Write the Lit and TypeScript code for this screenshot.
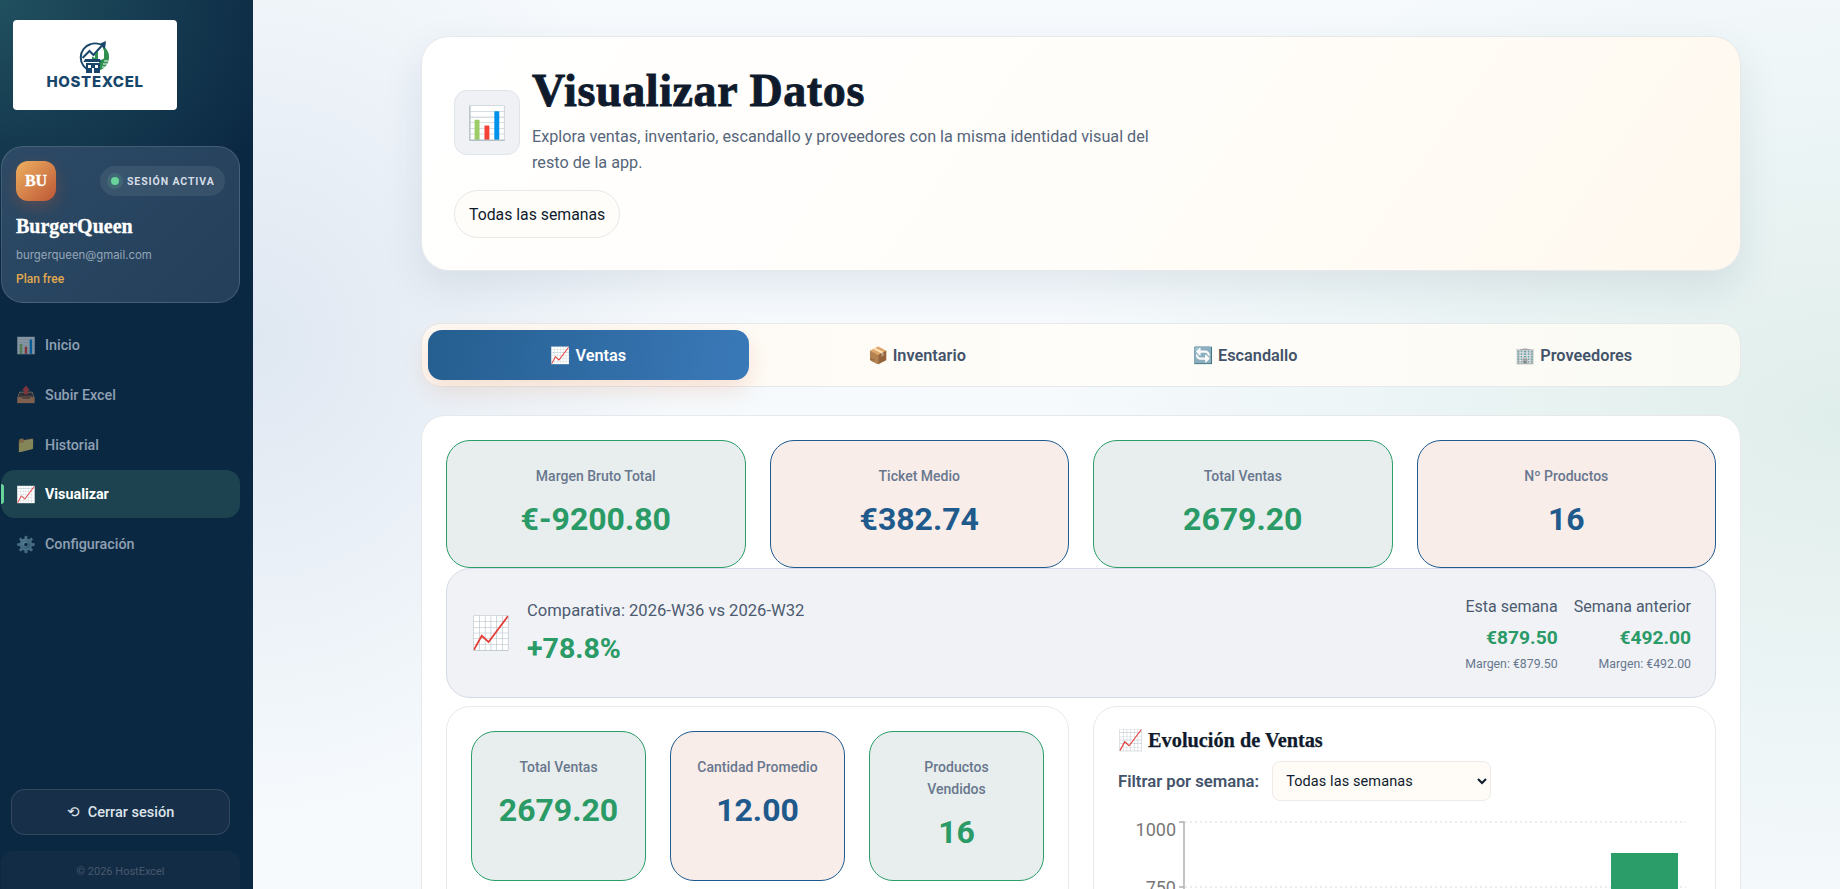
import { LitElement, css, html, svg } from "lit";
import { customElement } from "lit/decorators.js";

const NAV = [
  { icon: "📊", label: "Inicio" },
  { icon: "📤", label: "Subir Excel" },
  { icon: "📁", label: "Historial" },
  { icon: "📈", label: "Visualizar", active: true },
  { icon: "⚙️", label: "Configuración" },
];

const TABS = [
  { icon: "📈", label: "Ventas", active: true },
  { icon: "📦", label: "Inventario" },
  { icon: "🔄", label: "Escandallo" },
  { icon: "🏢", label: "Proveedores" },
];

const STATS = [
  { label: "Margen Bruto Total", value: "€-9200.80", tone: "green" },
  { label: "Ticket Medio", value: "€382.74", tone: "blue" },
  { label: "Total Ventas", value: "2679.20", tone: "green" },
  { label: "Nº Productos", value: "16", tone: "blue" },
];

const SALES = [
  { label: "Total Ventas", value: "2679.20", tone: "green" },
  { label: "Cantidad Promedio", value: "12.00", tone: "blue" },
  { label: "Productos Vendidos", value: "16", tone: "green" },
];

const WEEKS = [
  { label: "Esta semana", value: "€879.50", margin: "Margen: €879.50" },
  { label: "Semana anterior", value: "€492.00", margin: "Margen: €492.00" },
];

const logoMark = svg`
  <path d="M12 5A14 14 0 0 0 12 32" fill="none" stroke="#17466a" stroke-width="2"/>
  <path d="M12 5A14 14 0 0 1 21 5.300" fill="none" stroke="#17466a" stroke-width="1.600"/>
  <path d="M23 7c5 2 7.500 7 7 12-.5 6-4.500 11-10 12.500V22l5-2.500V12z" fill="#2f8f4e"/>
  <path d="M25 22h4M24 25h4M23 28h3" stroke="#fff" stroke-width="1"/>
  <path d="M3.500 19l7-7 4 4 8-9" fill="none" stroke="#17466a" stroke-width="2"/>
  <path d="M20 5l7-3-1 8z" fill="#17466a"/>
  <path d="M13 17.500l3 1.500v-4l3-3v8h-6z" fill="#2f8f4e"/>
  <path d="M6 20h15l1.500 3h-18z" fill="#17466a"/>
  <path d="M7 24h14v10H7z" fill="#17466a"/>
  <path d="M9 26h3v3H9zM16 26h3v3h-3z" fill="#fff"/>
  <path d="M13 29h2v5h-2z" fill="#fff"/>
`;

@customElement("app-root")
export class AppRoot extends LitElement {
  static styles = css`
    :host {
      display: block;
      height: 889px;
      overflow: hidden;
      font-family: Roboto, "Noto Sans", sans-serif;
      color: #0f1b2d;
    }

    .page {
      display: flex;
      height: 889px;
      background:
        radial-gradient(ellipse 800px 520px at 1840px 420px, #e0eeeb 0%, rgba(224, 238, 235, 0) 100%),
        radial-gradient(ellipse 440px 480px at 253px 340px, #dfe7f1 0%, rgba(223, 231, 241, 0) 100%),
        #f6fafd;
    }

    .sidebar {
      flex: 0 0 253px;
      box-sizing: border-box;
      display: flex;
      flex-direction: column;
      padding: 20px 13px 0 1px;
      background:
        radial-gradient(ellipse 300px 260px at 0 0, #21505f 0%, rgba(33, 80, 95, 0) 100%),
        #0b2843;
    }

    .logo {
      margin-left: 12px;
      width: 164px;
      height: 90px;
      box-sizing: border-box;
      padding-top: 19px;
      background: #fff;
      border-radius: 4px;
      display: flex;
      flex-direction: column;
      align-items: center;
    }

    .logo svg {
      width: 32px;
      height: 34px;
      display: block;
    }

    .logo span {
      margin-top: 1px;
      font-family: Inter, sans-serif;
      font-weight: 800;
      font-size: 15px;
      line-height: 15px;
      letter-spacing: 0.65px;
      color: #17466a;
    }

    .user {
      margin-top: 36px;
      height: 157px;
      box-sizing: border-box;
      padding: 14px;
      border: 1px solid rgba(255, 255, 255, 0.14);
      border-radius: 22px;
      background: linear-gradient(135deg, #2d4a66 0%, #233f5a 100%);
    }

    .user-head {
      display: flex;
      justify-content: space-between;
      align-items: center;
    }

    .avatar {
      width: 40px;
      height: 40px;
      border-radius: 12px;
      background: linear-gradient(135deg, #eeb160, #bd5636);
      box-shadow: 0 6px 16px rgba(190, 90, 50, 0.3);
      color: #fff;
      font-family: "Liberation Serif", serif;
      font-weight: 700;
      font-size: 16px;
      -webkit-text-stroke: 0.3px #fff;
      display: flex;
      align-items: center;
      justify-content: center;
    }

    .status {
      height: 30px;
      width: 125px;
      box-sizing: border-box;
      padding-left: 11px;
      border-radius: 15px;
      background: rgba(255, 255, 255, 0.08);
      display: flex;
      align-items: center;
      gap: 8px;
      font-size: 10.5px;
      font-weight: 700;
      letter-spacing: 0.9px;
      color: #d5dde6;
    }

    .dot {
      width: 8px;
      height: 8px;
      border-radius: 50%;
      background: #68d49b;
      box-shadow: 0 0 0 4px rgba(104, 212, 155, 0.16);
    }

    .user-name {
      margin-top: 14px;
      font-family: "Liberation Serif", serif;
      font-weight: 700;
      font-size: 20px;
      line-height: 22px;
      -webkit-text-stroke: 0.3px #fff;
      color: #fff;
    }

    .user-mail {
      margin-top: 10px;
      font-family: Inter, sans-serif;
      font-size: 11.4px;
      line-height: 16px;
      color: #94a6b8;
    }

    .user-plan {
      margin-top: 8px;
      font-size: 12px;
      line-height: 16px;
      font-weight: 500;
      color: #e2a94f;
    }

    nav {
      margin-top: 18px;
      display: flex;
      flex-direction: column;
      gap: 1.75px;
    }

    .nav-item {
      position: relative;
      height: 48px;
      padding-left: 15px;
      border-radius: 14px;
      display: flex;
      align-items: center;
      gap: 10px;
      font-size: 14.3px;
      font-weight: 500;
      color: #8fa0b2;
    }

    .nav-icon {
      width: 19px;
      font-size: 16px;
      opacity: 0.5;
      text-align: center;
    }

    .nav-item.active {
      background: #1c434f;
      color: #fff;
      font-weight: 700;
    }

    .nav-item.active .nav-icon {
      opacity: 1;
    }

    .nav-item.active::before {
      content: "";
      position: absolute;
      left: 0;
      top: 14px;
      width: 3px;
      height: 20px;
      border-radius: 0 3px 3px 0;
      background: #68d49b;
    }

    .spacer {
      flex: 1;
    }

    .logout {
      margin-left: 10px;
      width: 219px;
      height: 46px;
      box-sizing: border-box;
      border: 1px solid rgba(255, 255, 255, 0.12);
      border-radius: 14px;
      background: #172f49;
      color: #dde4ea;
      font-family: inherit;
      font-size: 14.5px;
      font-weight: 500;
      display: flex;
      align-items: center;
      justify-content: center;
      gap: 8px;
    }

    .footer {
      margin-top: 16px;
      height: 38px;
      padding-top: 13px;
      box-sizing: border-box;
      border-radius: 12px 12px 0 0;
      background: #132c45;
      text-align: center;
      font-size: 11px;
      line-height: 16px;
      color: #47596d;
    }

    main {
      flex: 1;
      min-width: 0;
      padding: 36px 99px 0 168px;
      overflow: hidden;
    }

    .hero {
      box-sizing: border-box;
      height: 235px;
      padding: 32px;
      border: 1px solid #e6e8ea;
      border-radius: 28px;
      background: linear-gradient(125deg, #ffffff 0%, #fffdf9 55%, #fff8ee 100%);
      box-shadow: 0 16px 40px rgba(30, 60, 90, 0.1);
    }

    .hero-row {
      display: flex;
      align-items: center;
      gap: 12px;
    }

    .hero-icon {
      flex: 0 0 64px;
      height: 63px;
      border: 1px solid #dfe3ea;
      border-radius: 13px;
      background: #eff1f5;
      display: flex;
      align-items: center;
      justify-content: center;
      font-size: 32px;
    }

    h1 {
      margin: 0 0 11px;
      font-family: "Liberation Serif", serif;
      font-weight: 700;
      font-size: 46px;
      line-height: 44px;
      letter-spacing: 0.6px;
      -webkit-text-stroke: 0.9px #0f1b2d;
    }

    .hero p {
      margin: 0;
      max-width: 640px;
      font-size: 16.2px;
      line-height: 26px;
      color: #56657a;
    }

    .week-pill {
      display: inline-flex;
      align-items: center;
      box-sizing: border-box;
      height: 48px;
      margin-top: 14px;
      padding: 0 14px;
      border: 1px solid #e8e8e6;
      border-radius: 24px;
      background: #fffdfa;
      font-size: 15.8px;
    }

    .tabs {
      margin-top: 52px;
      height: 64px;
      box-sizing: border-box;
      padding: 6px;
      border: 1px solid #e6e8ea;
      border-radius: 20px;
      background: linear-gradient(90deg, #fdf9f3, #fffdf9 50%, #fafaf5);
      display: grid;
      grid-template-columns: repeat(4, 1fr);
      gap: 8px;
    }

    .tab {
      border-radius: 14px;
      display: flex;
      align-items: center;
      justify-content: center;
      gap: 5px;
      font-size: 16.3px;
      font-weight: 600;
      color: #43536a;
    }

    .tab.active {
      color: #fff;
      background: linear-gradient(100deg, #255e8f, #3a79b9);
      box-shadow: 0 10px 24px rgba(214, 130, 90, 0.22);
    }

    .content {
      margin-top: 28px;
      padding: 24px;
      border: 1px solid #e6e8ea;
      border-radius: 24px;
      background: #fff;
    }

    .stats {
      display: grid;
      grid-template-columns: repeat(4, 1fr);
      gap: 24px;
    }

    .stat {
      box-sizing: border-box;
      padding: 24px;
      border: 1px solid;
      border-radius: 24px;
      text-align: center;
    }

    .stat.green {
      background: #e8eeed;
      border-color: #2a9d68;
    }

    .stat.blue {
      background: #f8ede9;
      border-color: #1f5a8f;
    }

    .stat-label {
      font-size: 14px;
      line-height: 22px;
      font-weight: 500;
      color: #68778e;
    }

    .stat-value {
      margin: 10px 0 2px;
      font-size: 32px;
      line-height: 44px;
      font-weight: 700;
    }

    .green .stat-value {
      color: #2a9a66;
    }

    .blue .stat-value {
      color: #1f5a8c;
    }

    .compare {
      box-sizing: border-box;
      height: 130px;
      padding: 0 24px;
      border: 1px solid #d5dbe6;
      border-radius: 24px;
      background: #f0f2f6;
      display: flex;
      align-items: center;
      gap: 16px;
    }

    .compare-icon {
      font-size: 32px;
      line-height: 44px;
    }

    .compare-title {
      margin-top: -1px;
      font-size: 16.6px;
      line-height: 24px;
      color: #4c5b70;
    }

    .compare-pct {
      margin-top: 9px;
      font-size: 28.500px;
      line-height: 34px;
      font-weight: 700;
      color: #2a9a66;
    }

    .weeks {
      margin-left: auto;
      display: flex;
      gap: 16px;
      text-align: right;
    }

    .week-label {
      font-size: 16px;
      line-height: 26px;
      color: #4c5b70;
    }

    .week-value {
      margin-top: 5px;
      font-size: 19.200px;
      line-height: 26px;
      font-weight: 700;
      color: #2a9a66;
    }

    .week-margin {
      margin-top: 4px;
      font-size: 12.300px;
      line-height: 18px;
      color: #68778e;
    }

    .panels {
      margin-top: 8px;
      display: grid;
      grid-template-columns: 1fr 1fr;
      gap: 24px;
    }

    .panel {
      padding: 24px;
      border: 1px solid #e8eaee;
      border-radius: 24px;
      background: #fff;
    }

    .mini-stats {
      display: grid;
      grid-template-columns: repeat(3, 1fr);
      gap: 24px;
    }

    h3 {
      margin: 0;
      font-family: "Liberation Serif", serif;
      font-size: 20.300px;
      line-height: 18px;
      font-weight: 700;
      -webkit-text-stroke: 0.25px #0f1b2d;
    }

    .filter {
      margin-top: 12px;
      display: flex;
      align-items: center;
      gap: 13px;
      font-size: 16.7px;
      font-weight: 600;
      color: #43536a;
    }

    select {
      width: 219px;
      height: 40px;
      padding: 0 9px;
      border: 1px solid #ecebe8;
      border-radius: 8px;
      background: #fffcf8;
      color: #0f1b2d;
      font-family: inherit;
      font-size: 14.5px;
      letter-spacing: 0.1px;
    }

    .chart {
      display: block;
      margin: 20px 0 0 -1px;
    }
  `;

  private statCard(s: { label: string; value: string; tone: string }) {
    return html`
      <div class="stat ${s.tone}">
        <div class="stat-label">${s.label}</div>
        <div class="stat-value">${s.value}</div>
      </div>
    `;
  }

  private renderSidebar() {
    return html`
      <aside class="sidebar">
        <div class="logo">
          <svg viewBox="0 0 32 34">${logoMark}</svg>
          <span>HOSTEXCEL</span>
        </div>
        <div class="user">
          <div class="user-head">
            <div class="avatar">BU</div>
            <div class="status"><i class="dot"></i>SESIÓN ACTIVA</div>
          </div>
          <div class="user-name">BurgerQueen</div>
          <div class="user-mail">burgerqueen@gmail.com</div>
          <div class="user-plan">Plan free</div>
        </div>
        <nav>
          ${NAV.map(
            (n) => html`
              <div class="nav-item ${n.active ? "active" : ""}">
                <span class="nav-icon">${n.icon}</span>${n.label}
              </div>
            `,
          )}
        </nav>
        <div class="spacer"></div>
        <button class="logout"><span>⟲</span>Cerrar sesión</button>
        <div class="footer">© 2026 HostExcel</div>
      </aside>
    `;
  }

  private renderChart() {
    // y axis: 250 units = 65px, the top tick sits at 1000
    return html`
      <svg class="chart" width="573" height="200" viewBox="0 0 573 200">
        <g stroke="#e6e6e6" stroke-width="1.5" stroke-dasharray="2 3">
          <line x1="68" y1="1" x2="569" y2="1"></line>
          <line x1="68" y1="66" x2="569" y2="66"></line>
        </g>
        <path d="M62 1h5v199M62 66h5" fill="none" stroke="#b0b0b0" stroke-width="1.5"></path>
        <rect x="494" y="32" width="67" height="168" fill="#2a9d68"></rect>
        <g font-family="Roboto, sans-serif" font-size="18" fill="#777" text-anchor="end">
          <text x="59" y="15">1000</text>
          <text x="59" y="73">750</text>
        </g>
      </svg>
    `;
  }

  render() {
    return html`
      <div class="page">
        ${this.renderSidebar()}
        <main>
          <section class="hero">
            <div class="hero-row">
              <div class="hero-icon">📊</div>
              <div>
                <h1>Visualizar Datos</h1>
                <p>Explora ventas, inventario, escandallo y proveedores con la misma identidad visual del resto de la app.</p>
              </div>
            </div>
            <div class="week-pill">Todas las semanas</div>
          </section>

          <div class="tabs">
            ${TABS.map(
              (t) => html`<div class="tab ${t.active ? "active" : ""}"><span>${t.icon}</span>${t.label}</div>`,
            )}
          </div>

          <section class="content">
            <div class="stats">${STATS.map((s) => this.statCard(s))}</div>

            <div class="compare">
              <div class="compare-icon">📈</div>
              <div>
                <div class="compare-title">Comparativa: 2026-W36 vs 2026-W32</div>
                <div class="compare-pct">+78.8%</div>
              </div>
              <div class="weeks">
                ${WEEKS.map(
                  (w) => html`
                    <div>
                      <div class="week-label">${w.label}</div>
                      <div class="week-value">${w.value}</div>
                      <div class="week-margin">${w.margin}</div>
                    </div>
                  `,
                )}
              </div>
            </div>

            <div class="panels">
              <div class="panel">
                <div class="mini-stats">${SALES.map((s) => this.statCard(s))}</div>
              </div>
              <div class="panel">
                <h3>📈 Evolución de Ventas</h3>
                <div class="filter">
                  Filtrar por semana:
                  <select><option>Todas las semanas</option></select>
                </div>
                ${this.renderChart()}
              </div>
            </div>
          </section>
        </main>
      </div>
    `;
  }
}
